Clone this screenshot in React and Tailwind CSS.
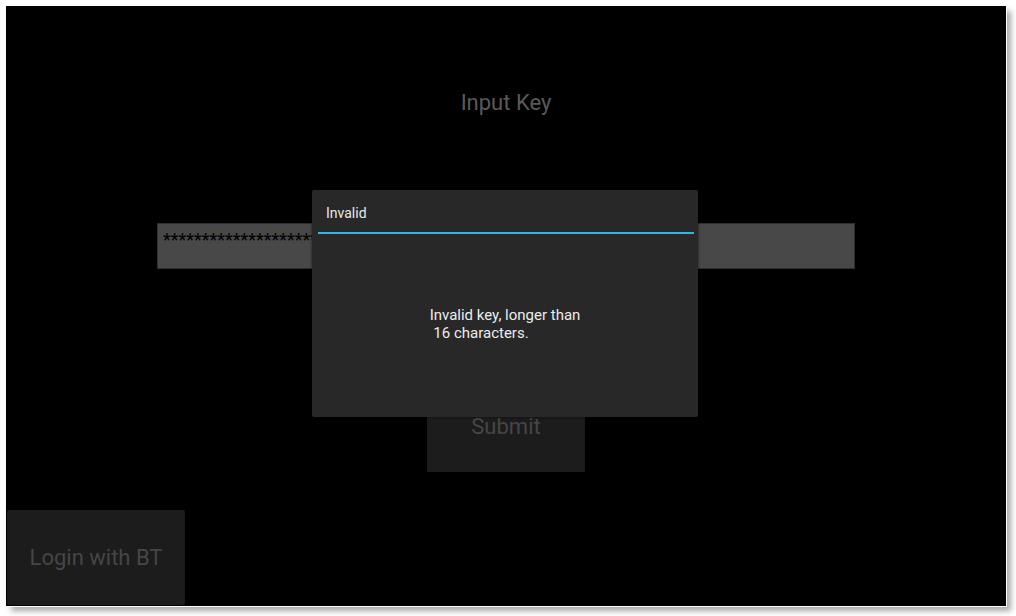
export default function App() {
  const font = { fontFamily: 'Roboto, "Noto Sans", sans-serif' };
  return (
    <div className="w-[1016px] h-[616px] bg-white pl-[6px] pt-[6px] overflow-hidden" style={font}>
      <div className="relative w-[1000px] h-[600px] bg-black flex flex-col items-center shadow-[1px_1px_0_#ffffff,5px_5px_6px_rgba(0,0,0,0.35)]">
        <div className="mt-[84px] h-[26px] leading-[26px] text-[22px] text-[#5a5a5a]">Input Key</div>
        <div className="mt-[107px] w-[698px] h-[46px] bg-[#484848] border border-[#2e2e2e] overflow-hidden pl-[5px] pt-[5px] text-[18px] leading-[22px] text-black whitespace-nowrap">
          ****************************
        </div>
        <div className="mt-[111px] w-[158px] h-[92px] bg-[#1c1c1c] flex items-center justify-center text-[22px] text-[#464646]">
          Submit
        </div>
        <div className="mt-[38px] self-start ml-[1px] w-[178px] h-[95px] bg-[#1c1c1c] rounded-[2px] flex items-center justify-center text-[22px] text-[#464646]">
          Login with BT
        </div>

        <div className="absolute left-[306px] top-[184px] w-[386px] h-[227px] bg-[#282828] rounded-[2px] shadow-[0_0_3px_rgba(0,0,0,0.6)] flex flex-col">
          <div className="h-[42px] flex items-center pt-[5px] pl-[14px] text-[14px] text-[#e8e8e8]">Invalid</div>
          <div className="ml-[6px] mr-[4px] h-[2px] bg-[#33b5e5]"></div>
          <div className="flex-1 flex items-center justify-center pb-[4px]">
            <div className="text-[15px] leading-[18px] text-[#ececec] whitespace-pre text-left">
              {"Invalid key, longer than\n 16 characters."}
            </div>
          </div>
        </div>
      </div>
    </div>
  );
}
